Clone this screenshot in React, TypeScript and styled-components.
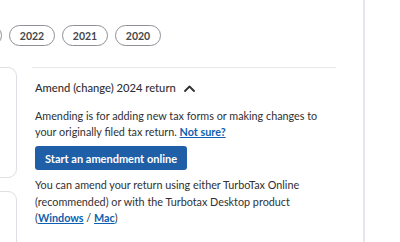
import React from "react";
import styled, { createGlobalStyle } from "styled-components";

const Global = createGlobalStyle`
  html, body { margin: 0; padding: 0; background: #ffffff; }
  body { font-family: Lato, "Noto Sans", sans-serif; color: #393a3d; overflow: hidden; }
  * { box-sizing: border-box; }
`;

const Page = styled.div`
  display: flex;
  width: 400px;
  height: 242px;
  overflow: hidden;
`;

const Main = styled.div`
  width: 363px;
  flex: none;
  display: flex;
  flex-direction: column;
  overflow: hidden;
`;

const Rule = styled.div`
  width: 2px;
  flex: none;
  background: #e3e7ec;
`;

const ChipRow = styled.div`
  display: flex;
  gap: 7px;
  margin-left: -44px;
  padding-top: 25px;
`;

const Chip = styled.button`
  flex: none;
  width: 46px;
  height: 21px;
  border: 1px solid #8d9096;
  border-radius: 11px;
  background: #fff;
  font-family: Lato, sans-serif;
  font-size: 10.5px;
  font-weight: 700;
  color: #45474b;
  padding: 0;
  display: flex;
  align-items: center;
  justify-content: center;
`;

const Body = styled.div`
  display: flex;
  gap: 15px;
  margin-top: 21px;
`;

const SideCol = styled.div`
  width: 17px;
  flex: none;
  display: flex;
  flex-direction: column;
  gap: 13px;
  overflow: hidden;
`;

const SideCard = styled.div<{ $h: number }>`
  width: 60px;
  margin-left: -43px;
  height: ${(p) => p.$h}px;
  border: 1px solid #dcdfe3;
  border-radius: 9px;
  flex: none;
`;

const Content = styled.div`
  width: 304px;
  flex: none;
  border-top: 1px solid #e6e8eb;
  border-bottom: 1px solid #e6e8eb;
  padding: 12px 3px 7px 3px;
`;

const Heading = styled.div`
  display: flex;
  align-items: center;
  gap: 8px;
  font-size: 11.2px;
  line-height: 16px;
  font-weight: 500;
  color: #2f3033;
`;

const Para = styled.p<{ $lh?: number }>`
  margin: 0;
  font-size: 10.8px;
  line-height: ${(p) => p.$lh ?? 16}px;
  color: #2f3033;
`;

const Link = styled.a`
  color: #0d5fb0;
  font-weight: 700;
  text-decoration: underline;
`;

const Button = styled.button`
  display: block;
  height: 24px;
  padding: 0 10px;
  margin: 6px 0 7px;
  background: #1f5fa7;
  color: #ffffff;
  border: none;
  border-radius: 3px;
  font-family: Lato, sans-serif;
  font-size: 11px;
  font-weight: 700;
`;

const First = styled(Para)`
  margin-top: 12px;
`;

export default function App() {
  return (
    <>
      <Global />
      <Page>
        <Main>
          <ChipRow>
            <Chip aria-label="2023" />
            <Chip>2022</Chip>
            <Chip>2021</Chip>
            <Chip>2020</Chip>
          </ChipRow>
          <Body>
            <SideCol>
              <SideCard $h={111} />
              <SideCard $h={80} />
            </SideCol>
            <Content>
              <Heading>
                Amend (change) 2024 return
                <svg width="11" height="7" viewBox="0 0 11 7">
                  <path d="M1 6 L5.5 1.5 L10 6" fill="none" stroke="#2f3033" strokeWidth="1.8" strokeLinecap="round" strokeLinejoin="round" />
                </svg>
              </Heading>
              <First>
                Amending is for adding new tax forms or making changes to your originally filed tax return. <Link href="#">Not sure?</Link>
              </First>
              <Button>Start an amendment online</Button>
              <Para $lh={16.5}>
                You can amend your return using either TurboTax Online (recommended) or with the Turbotax Desktop product (<Link href="#">Windows</Link> / <Link href="#">Mac</Link>)
              </Para>
            </Content>
          </Body>
        </Main>
        <Rule />
      </Page>
    </>
  );
}
